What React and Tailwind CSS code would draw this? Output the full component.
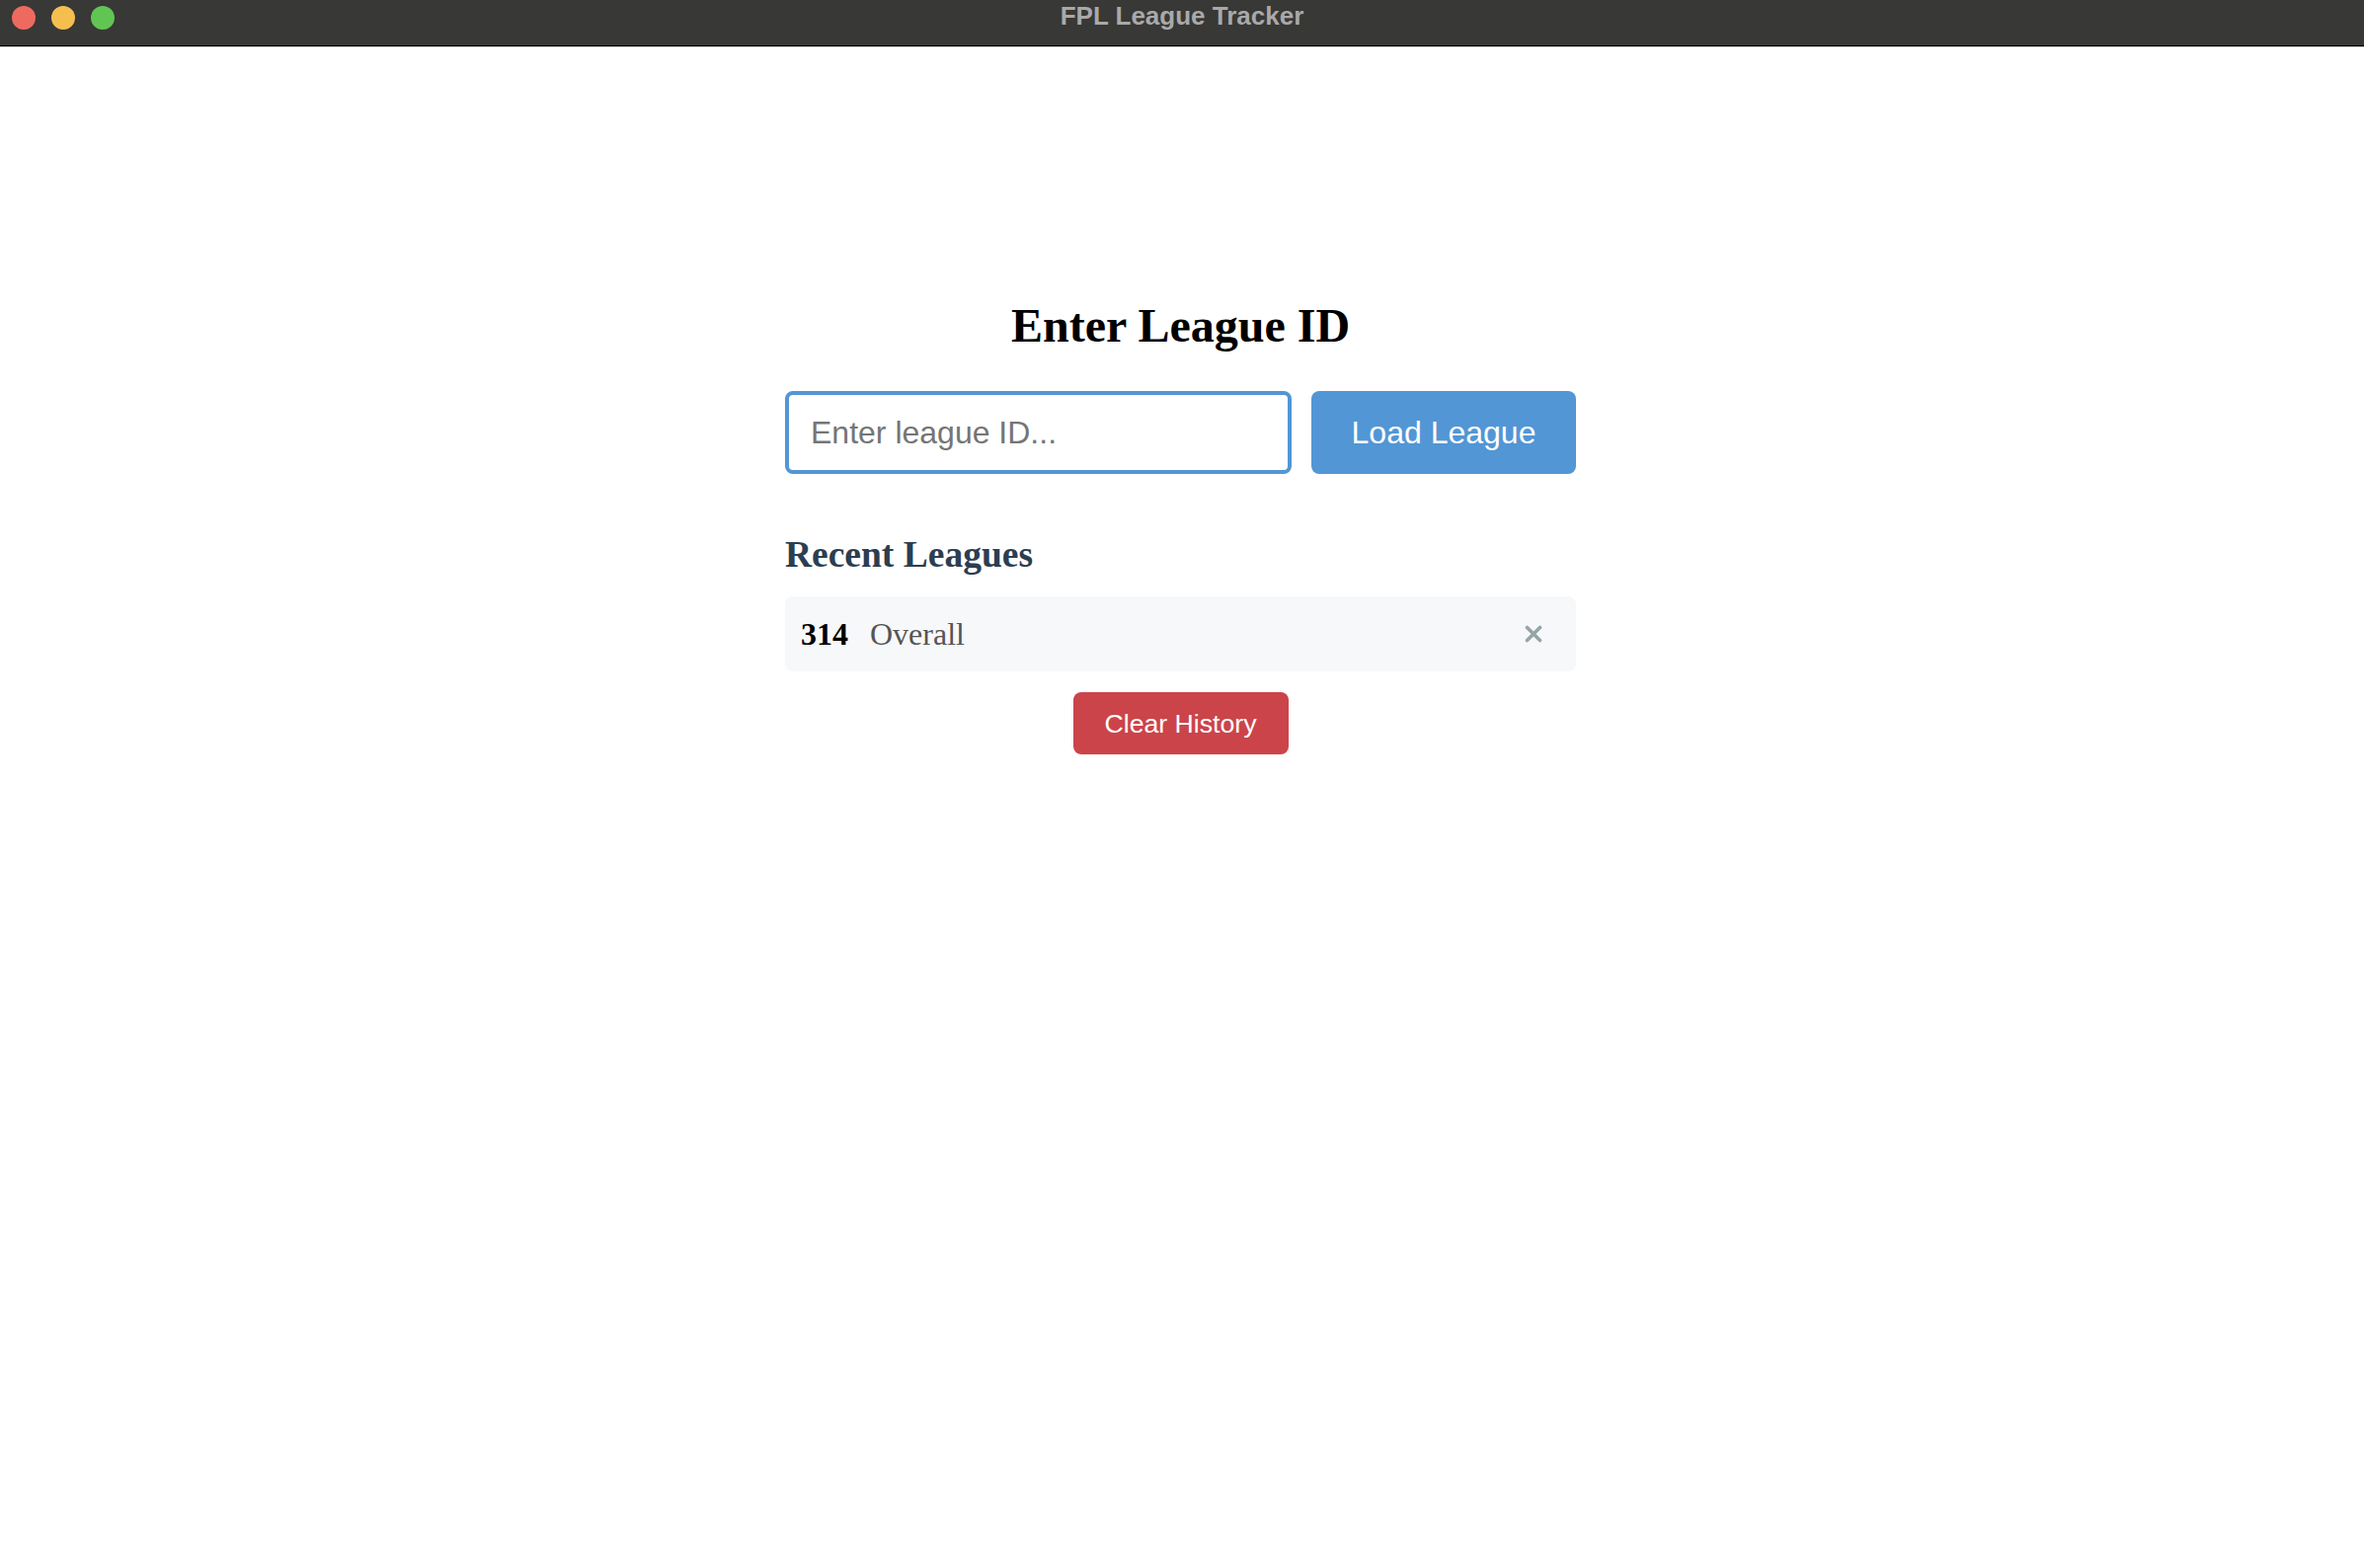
import React, { useState } from "react";

const serif = { fontFamily: '"Liberation Serif", "Times New Roman", serif' };
const sans = { fontFamily: '"Liberation Sans", Arial, sans-serif' };

const TitleBar = () => (
  <div className="relative h-[47px] bg-[#383836] border-b border-black flex items-start pt-[6px]">
    <div className="flex gap-4 pl-3">
      <span className="w-6 h-6 rounded-full bg-[#ee6a5f]" />
      <span className="w-6 h-6 rounded-full bg-[#f5bf4f]" />
      <span className="w-6 h-6 rounded-full bg-[#61c554]" />
    </div>
    <div
      className="absolute inset-x-0 top-0 h-[33px] flex items-center justify-center text-[26px] font-bold text-[#a9a9a9] pointer-events-none"
      style={sans}
    >
      FPL League Tracker
    </div>
  </div>
);

const App = () => {
  const [leagueId, setLeagueId] = useState("");
  const [recent, setRecent] = useState([{ id: 314, name: "Overall" }]);

  return (
    <div className="min-h-[1588px] bg-white flex flex-col">
      <TitleBar />
      <div className="border-t border-[#d4d4d4] flex-1 flex justify-center pt-[254px] pr-[3px]">
        <div className="w-[801px] flex flex-col">
          <h2
            className="text-[48px] leading-[56px] font-bold text-black text-center mb-[38px]"
            style={serif}
          >
            Enter League ID
          </h2>

          <div className="flex gap-5">
            <input
              value={leagueId}
              onChange={(e) => setLeagueId(e.target.value)}
              placeholder="Enter league ID..."
              className="flex-1 h-[84px] border-4 border-[#5296d5] rounded-lg px-[22px] text-[32px] text-black placeholder:text-[#757575] outline-none"
              style={sans}
            />
            <button
              className="w-[268px] h-[84px] rounded-lg bg-[#5296d5] text-white text-[32px]"
              style={sans}
            >
              Load League
            </button>
          </div>

          <h3
            className="mt-[60px] text-[37.5px] leading-[43px] font-bold text-[#2c3e50]"
            style={serif}
          >
            Recent Leagues
          </h3>

          <div className="mt-[21px] flex flex-col gap-3">
            {recent.map((l) => (
              <div
                key={l.id}
                className="h-[76px] rounded-lg bg-[#f7f8fa] flex items-center pl-4 pr-[34px]"
                style={serif}
              >
                <span className="text-[32px] font-bold text-black">{l.id}</span>
                <span className="ml-[22px] text-[32px] text-[#555555]">
                  {l.name}
                </span>
                <button className="ml-auto w-[18px] h-[18px] flex items-center justify-center">
                  <svg width="18" height="18" viewBox="0 0 18 18">
                    <path
                      d="M2.5 2.5 L15.5 15.5 M15.5 2.5 L2.5 15.5"
                      stroke="#95a5a6"
                      strokeWidth="3.6"
                      strokeLinecap="round"
                    />
                  </svg>
                </button>
              </div>
            ))}
          </div>

          <div className="mt-[21px] flex justify-center">
            <button
              onClick={() => setRecent([])}
              className="w-[218px] h-[63px] rounded-lg bg-[#cb444a] text-white text-[26.67px]"
              style={sans}
            >
              Clear History
            </button>
          </div>
        </div>
      </div>
    </div>
  );
};

export default App;
